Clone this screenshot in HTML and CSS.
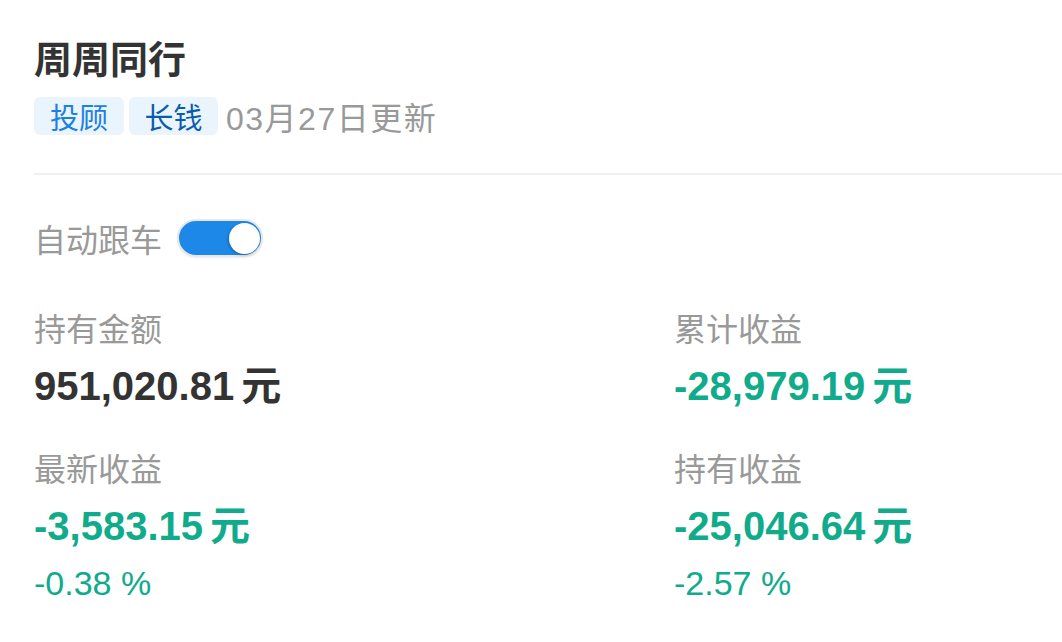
FILE: index.html
```html
<!DOCTYPE html>
<html lang="zh-CN">
<head>
<meta charset="utf-8">
<title>周周同行</title>
<link rel="stylesheet" href="styles.css">
</head>
<body>
<div class="card">
  <header class="head">
    <h1 class="title">周周同行</h1>
    <div class="meta">
      <span class="tag tag-blue">投顾</span>
      <span class="tag tag-navy">长钱</span>
      <span class="date">03月27日更新</span>
    </div>
  </header>
  <div class="divider"></div>
  <div class="follow">
    <span class="follow-label">自动跟车</span>
    <span class="switch"><span class="knob"></span></span>
  </div>
  <div class="stats">
    <div class="stat">
      <div class="label">持有金额</div>
      <div class="value dark">951,020.81<span class="unit">元</span></div>
    </div>
    <div class="stat">
      <div class="label">累计收益</div>
      <div class="value green">-28,979.19<span class="unit">元</span></div>
    </div>
    <div class="stat">
      <div class="label">最新收益</div>
      <div class="value green">-3,583.15<span class="unit">元</span></div>
      <div class="pct">-0.38 %</div>
    </div>
    <div class="stat">
      <div class="label">持有收益</div>
      <div class="value green">-25,046.64<span class="unit">元</span></div>
      <div class="pct">-2.57 %</div>
    </div>
  </div>
</div>
</body>
</html>
```

FILE: styles.css
```css
* { box-sizing: border-box; }
html, body {
  margin: 0;
  padding: 0;
  background: #ffffff;
}
body {
  font-family: "Liberation Sans", "Noto Sans CJK SC", sans-serif;
  color: #333333;
}
.card {
  padding: 40px 0 0 34px;
}
.head {
  display: flex;
  flex-direction: column;
}
.title {
  margin: 0 0 17px 0;
  font-size: 38px;
  line-height: 40px;
  font-weight: 700;
  color: #333333;
}
.meta {
  display: flex;
  align-items: center;
  height: 38px;
}
.tag {
  display: inline-flex;
  align-items: center;
  justify-content: center;
  height: 38px;
  padding: 0 15px;
  margin-right: 5px;
  border-radius: 6px;
  background: #eaf4fd;
  font-size: 29px;
}
.tag-blue { color: #1b80e4; width: 90px; }
.tag-navy { color: #0b5cad; width: 89px; }
.date {
  margin-left: 3px;
  font-size: 32px;
  color: #999999;
  letter-spacing: 1.5px;
}
.divider {
  margin-top: 38px;
  height: 2px;
  background: #f0f0f0;
}
.follow {
  display: flex;
  align-items: center;
  height: 38px;
  margin-top: 44px;
}
.follow-label {
  font-size: 32px;
  color: #999999;
  margin-right: 15px;
}
.switch {
  position: relative;
  display: inline-block;
  width: 86px;
  height: 38px;
  border-radius: 19px;
  background: #1e88e8;
  border: 2px solid #e8e8e8;
  box-shadow: 0 1px 2px rgba(0,0,0,0.08);
}
.knob {
  position: absolute;
  right: 1px;
  top: 1.5px;
  width: 31px;
  height: 31px;
  border-radius: 50%;
  background: #ffffff;
  box-shadow: -1px 1px 3px rgba(0,0,0,0.25);
}
.stats {
  display: grid;
  grid-template-columns: 640px 1fr;
  row-gap: 40px;
  margin-top: 53px;
}
.label {
  font-size: 32px;
  line-height: 40px;
  color: #999999;
}
.value {
  margin-top: 12px;
  font-size: 40px;
  line-height: 48px;
  font-weight: 700;
}
.unit {
  margin-left: 7px;
}
.dark { color: #333333; }
.green { color: #0fab8a; }
.pct {
  margin-top: 13px;
  font-size: 34px;
  line-height: 40px;
  color: #0fab8a;
}
```
